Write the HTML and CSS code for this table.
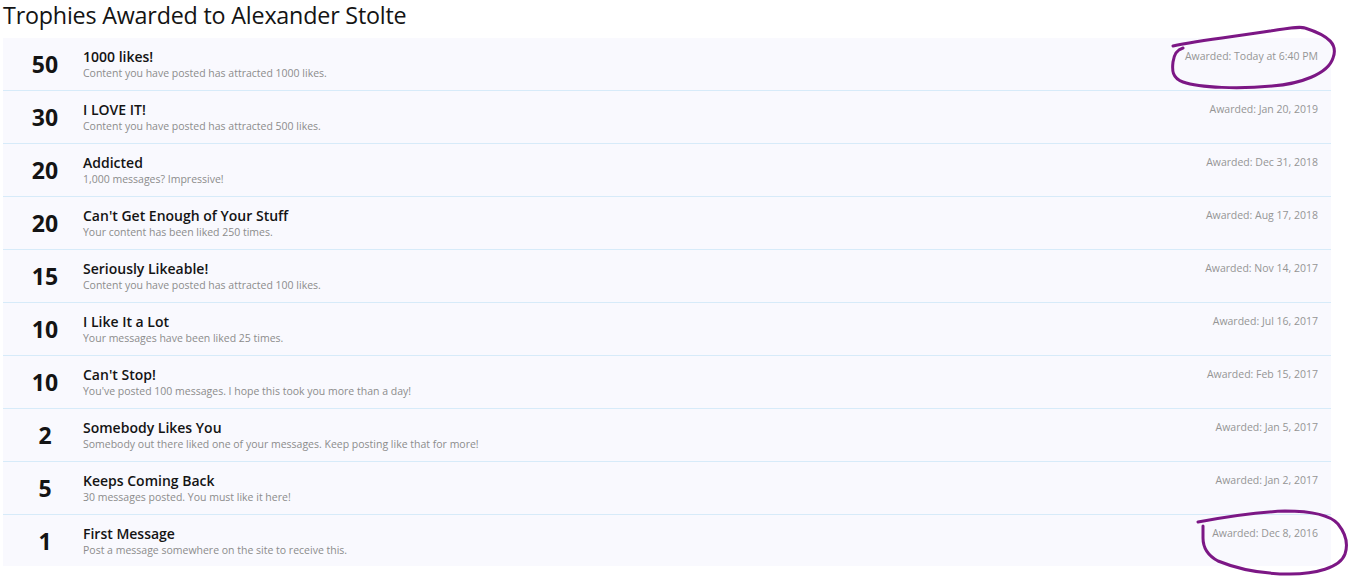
FILE: index.html
```html
<!DOCTYPE html>
<html>
<head>
<meta charset="utf-8">
<link rel="stylesheet" href="styles.css">
</head>
<body>
<h1 class="page-title">Trophies Awarded to Alexander Stolte</h1>
<ol class="trophies">
  <li class="trophy"><span class="points">50</span><div class="info"><h3 class="name">1000 likes!</h3><p class="desc">Content you have posted has attracted 1000 likes.</p></div><div class="date">Awarded: Today at 6:40 PM</div></li>
  <li class="trophy"><span class="points">30</span><div class="info"><h3 class="name">I LOVE IT!</h3><p class="desc">Content you have posted has attracted 500 likes.</p></div><div class="date">Awarded: Jan 20, 2019</div></li>
  <li class="trophy"><span class="points">20</span><div class="info"><h3 class="name">Addicted</h3><p class="desc">1,000 messages? Impressive!</p></div><div class="date">Awarded: Dec 31, 2018</div></li>
  <li class="trophy"><span class="points">20</span><div class="info"><h3 class="name">Can't Get Enough of Your Stuff</h3><p class="desc">Your content has been liked 250 times.</p></div><div class="date">Awarded: Aug 17, 2018</div></li>
  <li class="trophy"><span class="points">15</span><div class="info"><h3 class="name">Seriously Likeable!</h3><p class="desc">Content you have posted has attracted 100 likes.</p></div><div class="date">Awarded: Nov 14, 2017</div></li>
  <li class="trophy"><span class="points">10</span><div class="info"><h3 class="name">I Like It a Lot</h3><p class="desc">Your messages have been liked 25 times.</p></div><div class="date">Awarded: Jul 16, 2017</div></li>
  <li class="trophy"><span class="points">10</span><div class="info"><h3 class="name">Can't Stop!</h3><p class="desc">You've posted 100 messages. I hope this took you more than a day!</p></div><div class="date">Awarded: Feb 15, 2017</div></li>
  <li class="trophy"><span class="points">2</span><div class="info"><h3 class="name">Somebody Likes You</h3><p class="desc">Somebody out there liked one of your messages. Keep posting like that for more!</p></div><div class="date">Awarded: Jan 5, 2017</div></li>
  <li class="trophy"><span class="points">5</span><div class="info"><h3 class="name">Keeps Coming Back</h3><p class="desc">30 messages posted. You must like it here!</p></div><div class="date">Awarded: Jan 2, 2017</div></li>
  <li class="trophy"><span class="points">1</span><div class="info"><h3 class="name">First Message</h3><p class="desc">Post a message somewhere on the site to receive this.</p></div><div class="date">Awarded: Dec 8, 2016</div></li>
</ol>
<svg class="scribble scribble-top" width="180" height="70" viewBox="1168 24 180 70">
  <path d="M1173 46 C1200 40 1240 36 1270 31 C1290 28 1300 26 1305 28 C1330 36 1338 45 1333 58 C1328 74 1300 84 1272 86 C1240 89 1200 88 1183 82 C1172 78 1172 70 1173 62 C1174 55 1176 50 1183 48" fill="none" stroke="#7c1785" stroke-width="3" stroke-linecap="round"/>
</svg>
<svg class="scribble scribble-bottom" width="160" height="70" viewBox="1190 506 160 70">
  <path d="M1198 522 C1230 516 1260 512 1285 511 C1310 511 1330 515 1338 524 C1346 534 1348 545 1345 554 C1340 568 1315 574 1290 574 C1260 574 1235 568 1218 561 C1205 554 1203 545 1203 538 C1203 532 1203 528 1203 526" fill="none" stroke="#7c1785" stroke-width="3" stroke-linecap="round"/>
</svg>
</body>
</html>
```
FILE: styles.css
```css
html, body {
  margin: 0;
  padding: 0;
  background: #ffffff;
}
body {
  padding: 0 17px 0 3px;
  min-height: 576px;
  box-sizing: border-box;
  font-family: "Open Sans", "DejaVu Sans", sans-serif;
  color: #141414;
  position: relative;
}
.page-title {
  margin: 0;
  height: 38px;
  font-size: 23.3px;
  font-weight: 400;
  line-height: 30px;
  color: #141414;
  letter-spacing: -0.2px;
}
.trophies {
  list-style: none;
  margin: 0;
  padding: 0;
}
.trophy {
  display: flex;
  align-items: flex-start;
  height: 52px;
  background: #f9f9fe;
  border-bottom: 1px solid #d7ebf9;
  padding-left: 4px;
  padding-right: 13px;
}
.trophy:last-child {
  border-bottom: none;
  height: 51px;
}
.points {
  width: 76px;
  flex: none;
  text-align: center;
  font-size: 23px;
  font-weight: 700;
  line-height: 52px;
  color: #141414;
}
.info {
  flex: 1;
  padding-top: 10px;
}
.name {
  margin: 0;
  font-size: 14px;
  font-weight: 600;
  line-height: 18px;
  color: #141414;
}
.desc {
  margin: 0;
  font-size: 10.5px;
  line-height: 14px;
  color: #8c8c8c;
}
.date {
  padding-top: 11px;
  font-size: 10.5px;
  line-height: 14px;
  color: #959595;
  white-space: nowrap;
}
.scribble {
  position: absolute;
  overflow: visible;
}
.scribble-top {
  left: 1168px;
  top: 24px;
}
.scribble-bottom {
  left: 1190px;
  top: 506px;
}
```
